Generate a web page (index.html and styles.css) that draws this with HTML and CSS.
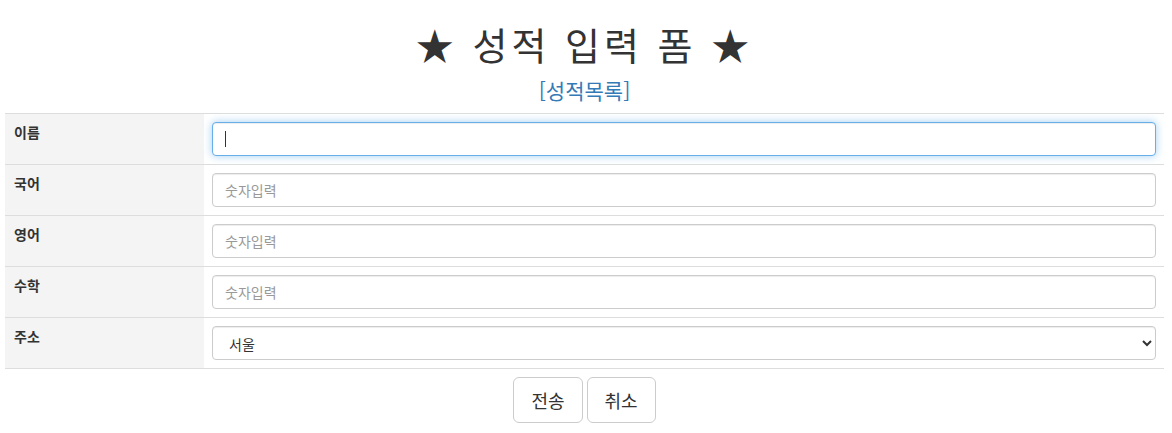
FILE: index.html
```html
<!DOCTYPE html>
<html lang="ko">
<head>
<meta charset="utf-8">
<title>성적 입력 폼</title>
<link rel="stylesheet" href="styles.css">
</head>
<body>
<div class="page">
  <h1 class="title">★ 성적 입력 폼 ★</h1>
  <p class="sub"><a href="#" class="list-link">[성적목록]</a></p>
  <form class="score-form">
    <table class="form-table">
      <tr>
        <th class="label">이름</th>
        <td class="field field-focus"><input type="text" class="control focused" autofocus><span class="caret"></span></td>
      </tr>
      <tr>
        <th class="label">국어</th>
        <td class="field"><input type="text" class="control" placeholder="숫자입력"></td>
      </tr>
      <tr>
        <th class="label">영어</th>
        <td class="field"><input type="text" class="control" placeholder="숫자입력"></td>
      </tr>
      <tr>
        <th class="label">수학</th>
        <td class="field"><input type="text" class="control" placeholder="숫자입력"></td>
      </tr>
      <tr>
        <th class="label">주소</th>
        <td class="field">
          <select class="control select">
            <option>서울</option>
            <option>경기</option>
            <option>부산</option>
          </select>
        </td>
      </tr>
    </table>
    <div class="actions">
      <button type="submit" class="btn">전송</button>
      <button type="reset" class="btn">취소</button>
    </div>
  </form>
</div>
</body>
</html>
```
FILE: styles.css
```css
* { box-sizing: border-box; }
html, body { margin: 0; padding: 0; background: #fff; }
body {
  font-family: "Noto Sans CJK KR", "Liberation Sans", sans-serif;
  font-size: 14px;
  line-height: 1.42857;
  color: #333;
}
.page { padding: 0 8px 0 5px; }
.title {
  margin: 23px 0 11px;
  font-size: 38px;
  font-weight: 400;
  line-height: 1.1;
  text-align: center;
  letter-spacing: 4px;
  color: #333;
}
.sub {
  margin: 0 0 9px;
  text-align: center;
  font-size: 21px;
  line-height: 28px;
}
.list-link { color: #337ab7; text-decoration: none; }
.form-table {
  width: 100%;
  border-collapse: collapse;
  border-spacing: 0;
}
.form-table tr { border-top: 1px solid #ddd; }
.form-table tr:last-child { border-bottom: 1px solid #ddd; }
.label {
  width: 199px;
  background: #f4f4f4;
  text-align: left;
  vertical-align: top;
  padding: 8px 9px;
  font-size: 14px;
  font-weight: bold;
}
.field { padding: 8px; vertical-align: top; }
.field-focus { position: relative; }
.caret {
  position: absolute;
  left: 21px;
  top: 17px;
  width: 1px;
  height: 16px;
  background: #333;
}
.control {
  display: block;
  width: 100%;
  height: 34px;
  padding: 6px 12px;
  font-family: inherit;
  font-size: 14px;
  color: #555;
  background: #fff;
  border: 1px solid #ccc;
  border-radius: 4px;
  box-shadow: inset 0 1px 1px rgba(0,0,0,.075);
  outline: none;
}
.control::placeholder { color: #999; }
.control.focused {
  border-color: #66afe9;
  box-shadow: inset 0 1px 1px rgba(0,0,0,.075), 0 0 8px rgba(102,175,233,.6);
  caret-color: transparent;
}
.select { padding: 6px 12px; color: #333; }
.actions {
  display: flex;
  justify-content: center;
  gap: 4px;
  padding-top: 8px;
}
.btn {
  padding: 10px 17px;
  font-family: inherit;
  font-size: 18px;
  line-height: 1.3333;
  color: #333;
  background: #fff;
  border: 1px solid #ccc;
  border-radius: 6px;
}
```
